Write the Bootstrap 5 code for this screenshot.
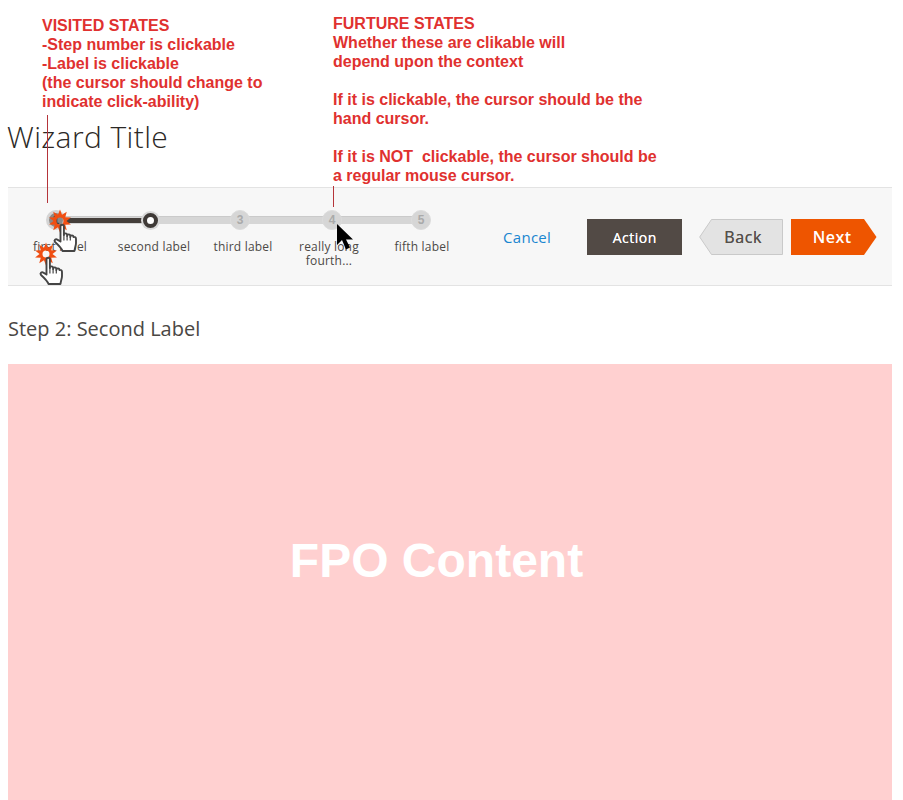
<!DOCTYPE html>
<html lang="en">
<head>
<meta charset="utf-8">
<title>Wizard</title>
<link href="https://cdn.jsdelivr.net/npm/bootstrap@5.3.0/dist/css/bootstrap.min.css" rel="stylesheet">
<style>
html,body{height:800px;overflow:hidden;background:#fff}
body{font-family:"Open Sans",sans-serif;color:#41403c;position:relative}
.head-zone{height:187px;display:flex;align-items:flex-end;padding:0 0 32px 7px}
.wiz-title{font-family:"Open Sans",sans-serif;font-weight:300;font-size:30px;line-height:36px;margin:0;color:#2b2825;letter-spacing:.4px}
.wiz-bar{margin:0 11px 0 8px;height:99px;background:#f7f7f7;border-top:1px solid #e3e3e3;border-bottom:1px solid #e3e3e3;padding:21px 16px 0 0}
.stepper{width:460px;flex:none}
.node-row{position:relative;display:flex;height:22px;padding-left:38px;align-items:center}
.track{position:absolute;left:40px;width:375px;top:7px;height:8px;background:#d6d6d6;border-radius:4px;box-shadow:inset 0 1px #cacaca}
.track-done{position:absolute;left:49px;width:92px;top:9px;height:5px;background:#453f3b}
.node{position:relative;flex:none;width:20px;height:20px;border-radius:50%;background:#d6d6d6;color:#aaa;font:700 12px/18px "Liberation Sans",sans-serif;text-align:center;border:1px solid #dcdcdc}
.node-3{margin-left:70px}.node-4{margin-left:72px}.node-5{margin-left:69px}
.node-visited{background:#8c8886;border:3px solid #d4d4d4;line-height:14px;color:#41403c}
.node-current{background:#fff;border:4.5px solid #3f3a37;box-shadow:0 0 0 2px #d8d8d8;width:15px;height:15px;margin-left:76.5px;margin-right:2.5px}
.label-row{display:flex;margin-top:9px}
.lbl{flex:none;width:90px;font-size:12px;line-height:14px;text-align:center;color:#4c4946;white-space:nowrap;letter-spacing:.2px}
.lbl-1{margin-left:7px}.lbl-2{margin-left:4px}.lbl-3{margin-left:-1px}.lbl-4{margin-left:-4px}.lbl-5{margin-left:3px}
.wiz-actions{margin-top:10px}
.wiz-cancel{font-size:15px;color:#1a86d0;text-decoration:none;margin-left:35px;letter-spacing:.3px}
.btn.wiz-action{margin-left:36px;width:95px;height:36px;border-radius:0;border:0;background:#524a45;color:#fff;font-size:14px;font-weight:500;padding:0;letter-spacing:.5px;text-shadow:0 0 .5px #fff}
.btn.wiz-arrow{position:relative;height:36px;border:0;border-radius:0;background:none;padding:0;font-size:16px;font-weight:500;letter-spacing:.7px}
.wiz-back{width:84px;margin-left:17px;color:#55504c;text-shadow:0 0 .5px #55504c}
.wiz-next{width:86px;margin-left:8px;color:#fff}
.btn.wiz-next{font-weight:600;letter-spacing:.5px}
.wiz-arrow svg{position:absolute;inset:0;width:100%;height:100%}
.wiz-arrow span{position:relative}
.wiz-back span{padding-left:4px}
.wiz-next span{padding-right:4px}
.step-name{font-size:20px;line-height:24px;color:#4a4744;margin:31px 0 23px 8px}
.fpo-box{margin:0 11px 0 8px;height:436px;background:#ffd0d0;color:#fff;font:700 48px/1 "Liberation Sans",sans-serif;padding:0 27px 42px 0}
.note{position:absolute;font:700 16px/19px "Liberation Sans",sans-serif;color:#e0312f;white-space:nowrap}
.note-a{left:42px;top:16px}
.note-b{left:333px;top:14px}
.lead-line{position:absolute;width:1px;background:#b5343a}
.line-a{left:47px;top:115px;height:88px}
.line-b{left:333px;top:186px;height:21px}
.over-ico{position:absolute}
.hand-1{left:48px;top:209px}
.hand-2{left:34px;top:242px}
.ptr{left:336px;top:224px}
</style>
</head>
<body>
<div class="head-zone"><h1 class="wiz-title">Wizard Title</h1></div>

<div class="wiz-bar d-flex align-items-start">
  <div class="stepper">
    <div class="node-row">
      <div class="track"></div>
      <div class="track-done"></div>
      <div class="node node-visited">1</div>
      <div class="node node-current"></div>
      <div class="node node-3">3</div>
      <div class="node node-4">4</div>
      <div class="node node-5">5</div>
    </div>
    <div class="label-row">
      <div class="lbl lbl-1">first label</div>
      <div class="lbl lbl-2">second label</div>
      <div class="lbl lbl-3">third label</div>
      <div class="lbl lbl-4">really long<br>fourth...</div>
      <div class="lbl lbl-5">fifth label</div>
    </div>
  </div>
  <div class="d-flex align-items-center wiz-actions">
    <a class="wiz-cancel" href="#">Cancel</a>
    <button class="btn wiz-action" type="button">Action</button>
    <button class="btn wiz-arrow wiz-back" type="button">
      <svg viewBox="0 0 84 36" preserveAspectRatio="none"><path d="M83.500.5H12.500L.7 18l11.800 17.500h71z" fill="#e3e3e3" stroke="#c9c9c9"/></svg>
      <span>Back</span>
    </button>
    <button class="btn wiz-arrow wiz-next" type="button">
      <svg viewBox="0 0 86 36" preserveAspectRatio="none"><path d="M0 0H73L85.500 18 73 36H0z" fill="#ee5500"/></svg>
      <span>Next</span>
    </button>
  </div>
</div>

<p class="step-name">Step 2: Second Label</p>
<div class="fpo-box d-flex align-items-center justify-content-center">FPO Content</div>

<div class="note note-a">VISITED STATES<br>-Step number is clickable<br>-Label is clickable<br>(the cursor should change to<br>indicate click-ability)</div>
<div class="note note-b">FURTURE STATES<br>Whether these are clikable will<br>depend upon the context<br><br>If it is clickable, the cursor should be the<br>hand cursor.<br><br>If it is NOT&nbsp; clickable, the cursor should be<br>a regular mouse cursor.</div>
<div class="lead-line line-a"></div>
<div class="lead-line line-b"></div>

<svg width="0" height="0" class="position-absolute">
  <symbol id="click-hand" viewBox="0 0 31 46">
    <path fill-rule="evenodd" fill="#f04e12" d="M12 .5L14.010 5.820 18.760 2.700 17.260 8.180 22.940 8.450 18.500 12 22.940 15.550 17.260 15.820 18.760 21.300 14.010 18.180 12 23.500 9.990 18.180 5.240 21.300 6.740 15.820 1.060 15.550 5.500 12 1.060 8.450 6.740 8.180 5.240 2.700 9.990 5.820zM12 8.500a3.500 3.500 0 1 0 0 7 3.500 3.500 0 0 0 0-7z"/>
    <g transform="translate(1 1)">
      <path d="M11.500 31.500V16.500a1.700 1.700 0 0 1 3.400 0V25a1.600 1.600 0 0 1 3.200 0v1a1.600 1.600 0 0 1 3.200 0v1a1.600 1.600 0 0 1 3.200 0c1.500-.5 2.500.5 2.500 2v4c0 2.500-1 4-1.500 8H13.500c-1-2.500-3-5-7.500-9-1.500-1.800.8-3.500 2.300-2.400z" fill="#fff" stroke="#454545" stroke-width="1.900" stroke-linejoin="round"/>
      <path d="M14.900 25v5.500M18.100 26v4.500M21.300 27v3.500" fill="none" stroke="#454545" stroke-width="1.200"/>
    </g>
  </symbol>
</svg>
<svg class="over-ico hand-1" width="31" height="46"><use href="#click-hand"/></svg>
<svg class="over-ico hand-2" width="31" height="46"><use href="#click-hand"/></svg>
<svg class="over-ico ptr" width="18" height="27" viewBox="0 0 18 27"><path d="M1 0v21l5-5 4 9.500 4-2-4-8h7z" fill="#000"/></svg>
<script src="https://cdn.jsdelivr.net/npm/bootstrap@5.3.0/dist/js/bootstrap.bundle.min.js"></script>
</body>
</html>
